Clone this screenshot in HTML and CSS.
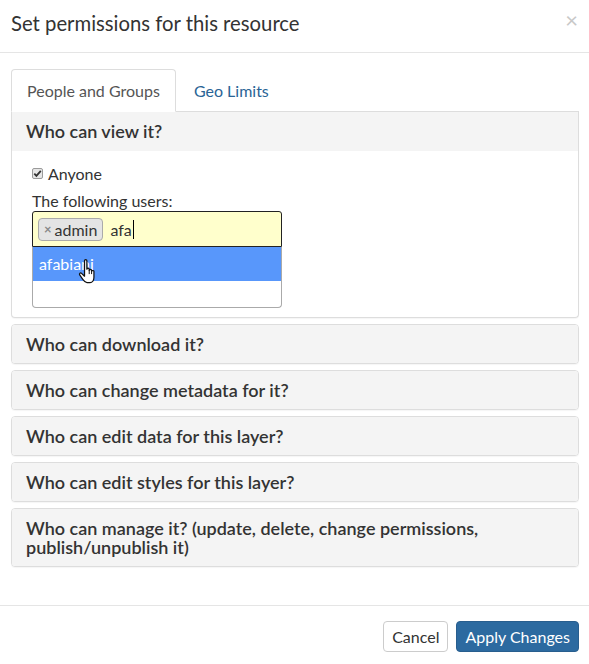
FILE: index.html
```html
<!DOCTYPE html>
<html>
<head>
<meta charset="utf-8">
<link rel="stylesheet" href="styles.css">
</head>
<body>
<div class="modal">
  <div class="modal-header">
    <h4 class="modal-title">Set permissions for this resource</h4>
    <span class="close">×</span>
  </div>
  <div class="modal-body">
    <ul class="tabs">
      <li class="tab active">People and Groups</li>
      <li class="tab">Geo Limits</li>
    </ul>
    <div class="panel open">
      <div class="panel-heading">Who can view it?</div>
      <div class="panel-body">
        <label class="check-row">
          <span class="checkbox"><svg width="11" height="11" viewBox="0 0 11 11"><path d="M2.3 5.6 L4.4 7.8 L8.8 2.8" fill="none" stroke="#333" stroke-width="1.8"/></svg></span>
          <span>Anyone</span>
        </label>
        <div class="label">The following users:</div>
        <div class="select">
          <div class="select-input">
            <span class="tag"><span class="tag-x">×</span>admin</span>
            <span class="typed">afa</span><span class="caret"></span>
          </div>
          <div class="dropdown">
            <div class="option hl">afabiani</div>
            <div class="option empty"></div>
            <svg class="hand" width="20" height="26" viewBox="0 0 16 21"><path d="M6 2.2 C6 1 7.9 1 7.9 2.2 L7.9 9 C7.9 8 9.8 8 9.8 9 L9.8 10 C9.8 9 11.7 9 11.7 10 L11.7 10.8 C11.7 9.9 13.6 9.9 13.6 10.8 L13.6 15.5 C13.6 18 12.2 19.8 10.5 19.8 L8 19.8 C6.5 19.8 5.6 18.6 4.6 17.2 L2.1 13.6 C1.5 12.7 2.7 11.5 3.6 12.4 L6 14.7 Z" fill="#fff" stroke="#111" stroke-width="1" stroke-linejoin="round"/><path d="M9.8 10 L9.8 13 M11.7 10.8 L11.7 13" stroke="#111" stroke-width="0.8"/></svg>
          </div>
        </div>
      </div>
    </div>
    <div class="panel"><div class="panel-heading">Who can download it?</div></div>
    <div class="panel"><div class="panel-heading">Who can change metadata for it?</div></div>
    <div class="panel"><div class="panel-heading">Who can edit data for this layer?</div></div>
    <div class="panel"><div class="panel-heading">Who can edit styles for this layer?</div></div>
    <div class="panel"><div class="panel-heading">Who can manage it? (update, delete, change permissions, publish/unpublish it)</div></div>
  </div>
  <div class="modal-footer">
    <button class="btn">Cancel</button>
    <button class="btn primary">Apply Changes</button>
  </div>
</div>
</body>
</html>
```
FILE: styles.css
```css
* { box-sizing: border-box; }
html, body { margin: 0; padding: 0; background: #fff; }
body {
  font-family: Lato, "Open Sans", sans-serif;
  font-size: 16px;
  color: #333;
}
.modal { width: 589px; }
.modal-header {
  height: 53px;
  border-bottom: 1px solid #e5e5e5;
  padding: 10px 11px 0 11px;
  display: flex;
  justify-content: space-between;
  align-items: flex-start;
}
.modal-title {
  margin: 0;
  font-size: 20.3px;
  font-weight: 400;
  line-height: 26px;
  color: #333;
}
.close {
  font-size: 22px;
  line-height: 20px;
  color: #c8c8c8;
  margin-right: 0;
  margin-top: 0;
}
.modal-body { padding: 16px 10px 0 11px; height: 552px; }
.tabs {
  list-style: none;
  margin: 0;
  padding: 0;
  display: flex;
  border-bottom: 1px solid #ddd;
  height: 43px;
}
.tab {
  padding: 0 15px;
  height: 43px;
  line-height: 41px;
  font-size: 16px;
  color: #2a6496;
  border: 1px solid transparent;
  border-radius: 4px 4px 0 0;
}
.tab.active {
  color: #555;
  border-color: #ddd;
  border-bottom-color: #fff;
  background: #fff;
}
.tab + .tab { padding-left: 17px; }
.panel {
  border: 1px solid #ddd;
  border-radius: 4px;
  margin-bottom: 6px;
  background: #fff;
  box-shadow: 0 1px 1px rgba(0,0,0,0.04);
}
.panel.open { border-top: 0; border-radius: 0 0 4px 4px; }
.panel-heading {
  background: #f4f4f4;
  padding: 10px 14px 9px;
  font-size: 18px;
  font-weight: 600;
  line-height: 19px;
  color: #333;
  border-radius: 3px;
}
.panel.open .panel-heading { padding: 10px 14px 10px; border-radius: 0; }
.panel-body { padding: 13px 20px 9px; }
.check-row { display: flex; align-items: center; gap: 5px; height: 18px; font-size: 16px; }
.checkbox {
  width: 11px; height: 11px;
  border: 1px solid #9a9a9a;
  border-radius: 2px;
  background: #e6e6e6;
  display: flex;
  position: relative;
}
.checkbox svg { position: absolute; left: -1px; top: -1px; }
.label { margin-top: 10px; font-size: 16px; line-height: 18px; }
.select { margin-top: 1px; width: 250px; position: relative; }
.select-input {
  height: 36px;
  border: 1px solid #222;
  background: #ffffcc;
  border-radius: 3px 3px 0 0;
  display: flex;
  align-items: center;
  padding: 0 5px;
}
.tag {
  display: inline-flex;
  align-items: center;
  height: 23px;
  padding: 0 5px 0 5px;
  background: #e4e4e4;
  border: 1px solid #aaa;
  border-radius: 4px;
  font-size: 16px;
  color: #333;
}
.tag-x { color: #888; font-size: 13px; margin-right: 3px; font-weight: 700; }
.typed { margin-left: 7px; font-size: 16px; }
.caret { display: inline-block; width: 1px; height: 19px; background: #000; margin-left: 1px; }
.dropdown {
  border: 1px solid #aaa;
  border-top: 0;
  border-radius: 0 0 4px 4px;
  height: 61px;
  position: relative;
}
.option { height: 34px; padding: 0 6px; line-height: 34px; font-size: 16px; }
.option.hl { background: #5897fb; color: #fff; font-weight: 400; }
.hand { position: absolute; left: 44px; top: 11px; }
.modal-footer {
  border-top: 1px solid #e5e5e5;
  padding: 15px 10px 0 0;
  display: flex;
  justify-content: flex-end;
  gap: 8px;
}
.btn {
  font-family: Lato, "Open Sans", sans-serif;
  font-size: 16px;
  height: 31px;
  padding: 0 8px;
  border: 1px solid #ccc;
  border-radius: 4px;
  background: #fff;
  color: #333;
}
.btn.primary { background: #2c6aa0; border-color: #285e8e; color: #fff; }
```
